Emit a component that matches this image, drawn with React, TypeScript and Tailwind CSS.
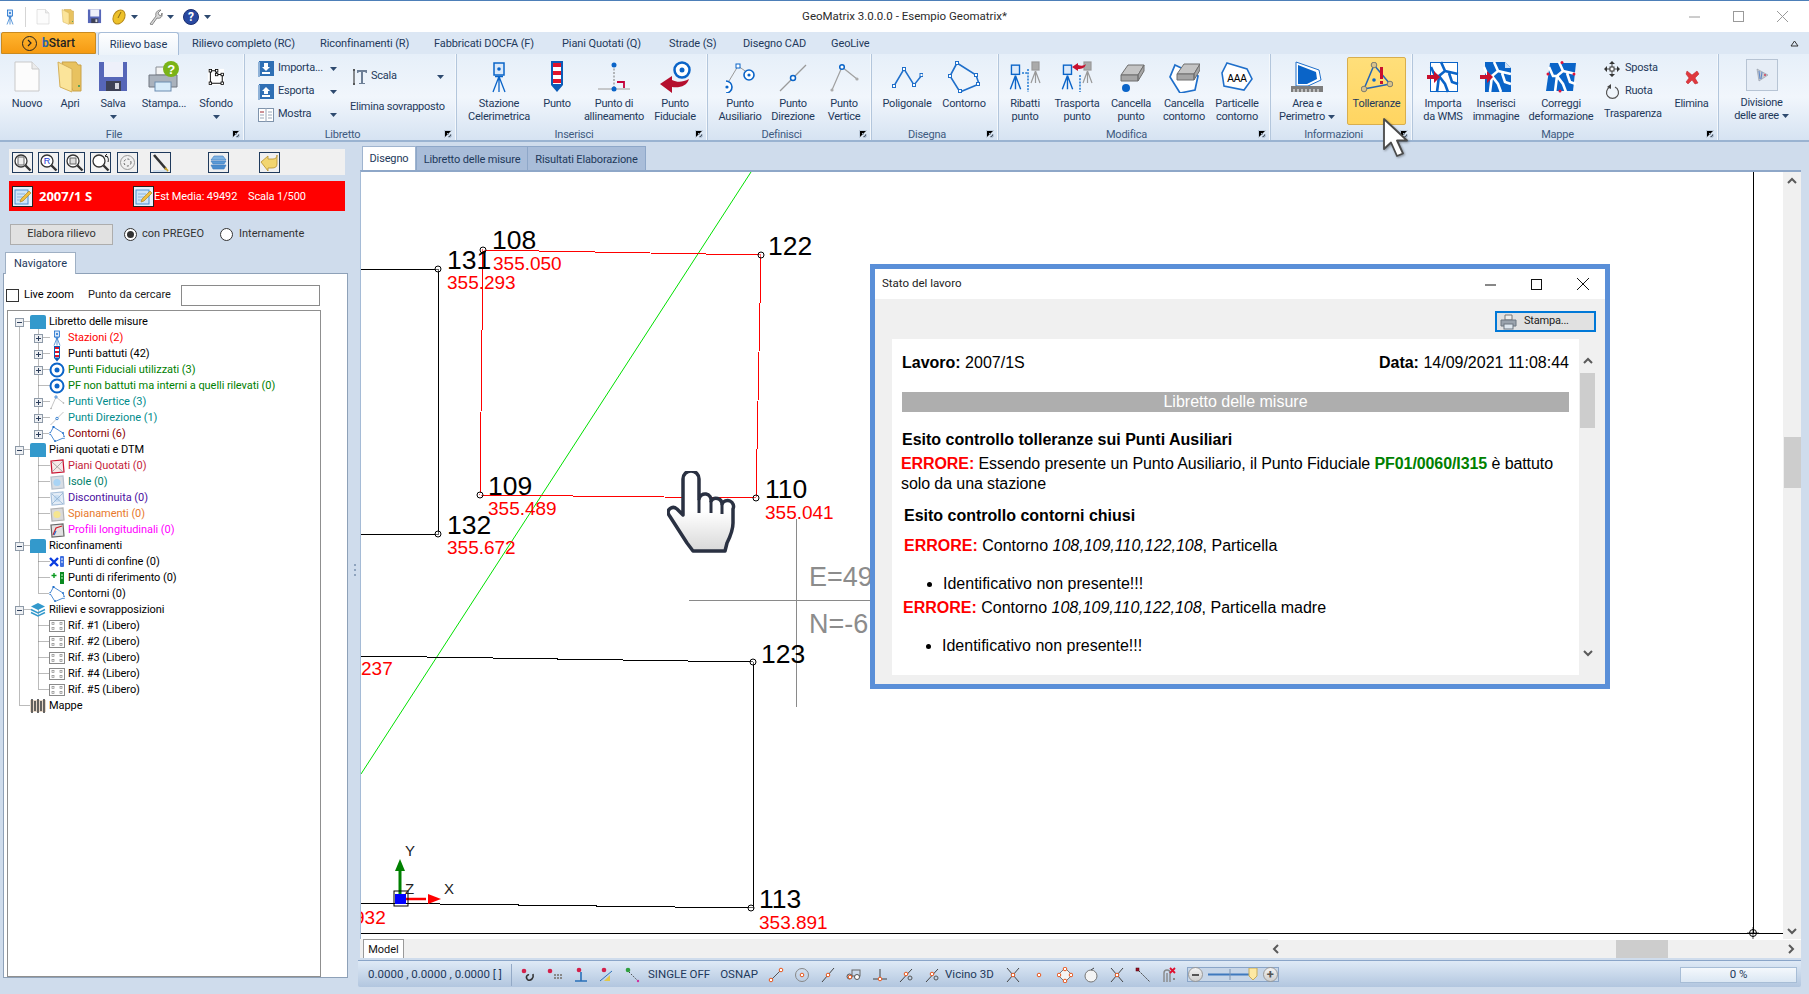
import React from 'react';

type IconProps = { s?: number };
const I = ({ s = 32, children }: { s?: number; children: React.ReactNode }) => (
  <svg width={s} height={s} viewBox="0 0 32 32" fill="none" className="shrink-0">{children}</svg>
);
const S = ({ children }: { children: React.ReactNode }) => (
  <svg width={16} height={16} viewBox="0 0 16 16" fill="none" className="shrink-0">{children}</svg>
);

const BLUE = '#0a64c8';

// ---- icone ribbon ----
const IconNew = ({ s }: IconProps) => (
  <I s={s}><path d="M4 1h17l7 7v22H4z" fill="#fcfcfc" stroke="#c9c9c9" /><path d="M21 1v7h7" fill="#ececec" stroke="#c9c9c9" /></I>
);
const IconFolder = ({ s }: IconProps) => (
  <I s={s}><path d="M8 1h14l2 3h3v26h-8z" fill="#e8c25f" stroke="#c9a24a" /><path d="M4 1l14 7v23L6 26z" fill="#fbe49a" stroke="#d5b05a" /><rect x="24" y="24" width="2" height="2" fill="#5aa05a" /></I>
);
const IconSave = ({ s }: IconProps) => (
  <I s={s}><rect x="2" y="1" width="28" height="29" fill="#5666b8" /><rect x="7" y="1" width="19" height="15" fill="#eef0fa" /><rect x="9" y="20" width="15" height="10" fill="#3d4156" /><rect x="18" y="22" width="4" height="6" fill="#d6d8e2" /></I>
);
const IconPrint = ({ s }: IconProps) => (
  <I s={s}>
    <path d="M8 6h14v8H8z" fill="#f4f4f4" stroke="#8a8f96" />
    <path d="M1 14h28v12H1z" fill="#aab2bc" stroke="#717780" />
    <rect x="7" y="21" width="16" height="9" fill="#d7ecfa" stroke="#6d8db0" />
    <circle cx="23" cy="8" r="8" fill="#7ab317" />
    <text x="23" y="13" textAnchor="middle" fontSize="13" fontWeight="700" fill="#fff" fontFamily="Liberation Sans">?</text>
  </I>
);
const IconSfondo = ({ s }: IconProps) => (
  <I s={s}>
    <rect x="3" y="3" width="26" height="26" fill="#fff" />
    <path d="M7 6h10v6h9v14H7z" stroke="#000" strokeWidth="1.500" />
    <g fill="#fff" stroke="#000" strokeWidth="1.300"><rect x="5" y="4" width="4" height="4" /><rect x="15" y="4" width="4" height="4" /><rect x="15" y="10" width="4" height="4" /><rect x="24" y="10" width="4" height="4" /><rect x="24" y="24" width="4" height="4" /><rect x="5" y="24" width="4" height="4" /></g>
  </I>
);
const IconStation = ({ s }: IconProps) => (
  <I s={s}>
    <rect x="11" y="2" width="10" height="12" fill="#dbe9fa" stroke={BLUE} strokeWidth="1.500" />
    <circle cx="16" cy="8" r="1.800" fill={BLUE} />
    <path d="M12 15.500h8M16 15.500L10 31M16 15.500v15.500M16 15.500L22 31" stroke={BLUE} strokeWidth="1.300" />
  </I>
);
const IconMarker = ({ s }: IconProps) => (
  <I s={s}>
    <path d="M10 0h12v24l-6 7-6-7z" fill="#0b5cb8" />
    <rect x="12" y="2" width="8" height="21" fill="#fff" />
    <rect x="12" y="2" width="8" height="4" fill="#e0142c" /><rect x="12" y="10" width="8" height="4" fill="#e0142c" /><rect x="12" y="18" width="8" height="4" fill="#e0142c" />
  </I>
);
const IconAllinea = ({ s }: IconProps) => (
  <I s={s}>
    <path d="M0 28h32" stroke="#a9a9a9" strokeWidth="1.2" />
    <path d="M16 4v24" stroke="#777" strokeDasharray="2 1.5" />
    <circle cx="16" cy="4" r="2.5" fill={BLUE} /><circle cx="16" cy="28" r="2.5" fill={BLUE} />
    <path d="M19 21h7v6" stroke="#c4003a" strokeWidth="1.8" />
  </I>
);
const IconFiducial = ({ s }: IconProps) => (
  <I s={s}>
    <circle cx="23" cy="9" r="7.5" fill="#fff" stroke={BLUE} strokeWidth="2.5" /><circle cx="23" cy="9" r="2.5" fill={BLUE} />
    <path d="M1 23l12-8v4c6 3 11 2 17-1-2 7-9 9-17 8v6z" fill="#b50f2e" />
  </I>
);
const Ring = ({ s = 16 }: IconProps) => (
  <I s={s}><circle cx="16" cy="16" r="13" fill="#fff" stroke={BLUE} strokeWidth="4" /><circle cx="16" cy="16" r="5" fill={BLUE} /></I>
);
const IconAusil = ({ s }: IconProps) => (
  <I s={s}>
    <path d="M5 20L14 5l10 7" stroke="#999" />
    <rect x="12" y="3" width="4" height="4" fill="#fff" stroke={BLUE} />
    <circle cx="25" cy="14" r="5" fill="#fff" stroke={BLUE} strokeWidth="1.6" /><circle cx="25" cy="14" r="1.6" fill={BLUE} />
    <path d="M0 20a6 6 0 0 1 0 12" fill="#fff" stroke={BLUE} strokeWidth="1.6" transform="translate(2 0)" /><circle cx="3" cy="26" r="1.6" fill={BLUE} />
  </I>
);
const IconDirez = ({ s }: IconProps) => (
  <I s={s}><path d="M3 30L29 4" stroke="#9a9a9a" strokeWidth="1.2" /><circle cx="16" cy="17" r="2.5" fill="#fff" stroke={BLUE} strokeWidth="1.5" /></I>
);
const IconVert = ({ s }: IconProps) => (
  <I s={s}><path d="M4 29L14 6l15 12" stroke="#a0a0a0" strokeWidth="1.2" /><circle cx="14" cy="6" r="2.3" fill="#fff" stroke={BLUE} strokeWidth="1.5" /><circle cx="4" cy="29" r="1.6" fill="#aaa" /><circle cx="29" cy="18" r="1.6" fill="#aaa" /></I>
);
const IconPolig = ({ s }: IconProps) => (
  <I s={s}>
    <path d="M3 25L13 8l10 16 8-10" stroke="#1f6fca" strokeWidth="1.5" />
    <g fill="#fff" stroke="#1f6fca"><rect x="1.5" y="23.5" width="3" height="3" /><rect x="11.5" y="6.5" width="3" height="3" /><rect x="21.5" y="22.5" width="3" height="3" /><rect x="29" y="12.5" width="3" height="3" /></g>
  </I>
);
const IconContorno = ({ s }: IconProps) => (
  <I s={s}>
    <path d="M9 2l19 12 3 9-19 8L2 15z" fill="#fff" fillOpacity=".15" stroke="#1f6fca" strokeWidth="1.6" />
    <g fill="#fff" stroke="#1f6fca"><rect x="7.5" y="0.5" width="3" height="3" /><rect x="26.5" y="12.5" width="3" height="3" /><rect x="28.5" y="21.5" width="3" height="3" /><rect x="10.5" y="28.5" width="3" height="3" /><rect x="0.5" y="13.5" width="3" height="3" /></g>
  </I>
);
const MiniTripod = ({ x, c }: { x: number; c: string }) => (
  <g transform={`translate(${x} 0)`} stroke={c} strokeWidth="1.2">
    <rect x="3" y="1" width="7" height="8" fill={c === '#999' ? '#aaa' : '#dbe9fa'} />
    <path d="M6.5 10L2 22M6.5 10v12M6.5 10L11 22" />
  </g>
);
const IconRibatti = ({ s }: IconProps) => (
  <I s={s}>
    <g transform="translate(-1 3) scale(1.15)"><MiniTripod x={0} c={BLUE} /></g>
    <MiniTripod x={20} c="#999" />
    <path d="M13 12h5M19 8v23" stroke="#1f78d1" strokeDasharray="2 1.2" strokeWidth="1.5" />
  </I>
);
const IconTrasp = ({ s }: IconProps) => (
  <I s={s}>
    <g transform="translate(-1 3) scale(1.15)"><MiniTripod x={0} c={BLUE} /></g>
    <MiniTripod x={20} c="#999" />
    <path d="M19 14v17" stroke="#1f78d1" strokeDasharray="2 1.2" strokeWidth="1.5" />
    <path d="M11 6l6-4v2c3 1 6 1 8-1-1 4-4 5-8 5v2z" fill="#c8102e" />
  </I>
);
const Eraser = ({ tf = '' }: { tf?: string }) => (
  <g transform={tf}>
    <path d="M9 3h16l-6 10H2z" fill="#c4c4c4" stroke="#6f6f6f" />
    <path d="M2 13h17v6H2zM19 13l6-10v6l-6 10z" fill="#a5a5a5" stroke="#6f6f6f" />
  </g>
);
const IconCancP = ({ s }: IconProps) => (
  <I s={s}><Eraser tf="translate(4 1)" /><circle cx="11" cy="27" r="4" fill={BLUE} /></I>
);
const IconCancC = ({ s }: IconProps) => (
  <I s={s}><path d="M7 4l23 11-3 14-15 3L2 16z" fill="#fff" stroke="#1f6fca" strokeWidth="1.7" /><Eraser tf="translate(7 0)" /></I>
);
const IconPart = ({ s }: IconProps) => (
  <I s={s}>
    <path d="M6 2l20 6 5 10-8 11-20-4L1 12z" fill="#fff" stroke="#1f6fca" strokeWidth="1.6" />
    <text x="16" y="21" textAnchor="middle" fontSize="10" fill="#000" fontFamily="Liberation Sans">AAA</text>
  </I>
);
const IconArea = ({ s }: IconProps) => (
  <I s={s}>
    <path d="M5 1l23 8 2 10-13 6H5z" fill="#fff" stroke="#1f6fca" strokeWidth="1" />
    <path d="M7 4l18 7 1 7-10 5H7z" fill="#0a64c8" />
    <rect x="0" y="25" width="32" height="6" fill="#7d7d7d" />
    <path d="M3 28v3M7 28v3M11 28v3M15 28v3M19 28v3M23 28v3M27 28v3" stroke="#fff" />
  </I>
);
const IconToll = ({ s }: IconProps) => (
  <I s={s}>
    <path d="M13 3L3 27l26-5z" stroke="#2265b8" strokeWidth="1.5" />
    <g fill="#d8c28a" stroke="#7a7a70"><circle cx="13" cy="3" r="2.8" /><circle cx="3" cy="27" r="2.8" /><circle cx="29" cy="22" r="2.8" /></g>
    <circle cx="13" cy="18" r="1.8" fill={BLUE} />
    <rect x="19" y="5" width="3" height="12" fill="#c8102e" /><rect x="19" y="19" width="3" height="3" fill="#c8102e" />
  </I>
);
const Roads = ({ c }: { c: string }) => (
  <path d="M14 1l4 9-6 5 6 8 3 8M18 10l13 3M14 15H8L4 6M12 15l-2 16M22 12l3 9 6 2" stroke={c} strokeWidth="2.6" />
);
const RedIn = () => <path d="M0 14h7v-4l6 6-6 6v-4H0z" fill="#c8102e" />;
const IconWms = ({ s }: IconProps) => (
  <I s={s}><rect x="3" y="1" width="28" height="30" fill={BLUE} /><rect x="4" y="2" width="26" height="28" fill="#fff" /><Roads c={BLUE} /><RedIn /></I>
);
const IconIns = ({ s }: IconProps) => (
  <I s={s}><path d="M5 1h20l6 6v24H5z" fill={BLUE} /><path d="M25 1v6h6" fill="#cfe1f6" /><Roads c="#fff" /><RedIn /></I>
);
const IconCorr = ({ s }: IconProps) => (
  <I s={s}>
    <path d="M5 2h26l-3 28H1z" fill={BLUE} /><Roads c="#fff" />
    <g fill="#e0143c"><circle cx="17" cy="1.5" r="1.5" /><circle cx="3" cy="13" r="1.5" /><circle cx="29" cy="13" r="1.5" /><circle cx="15" cy="30" r="1.5" /></g>
  </I>
);
const IconMove = () => (
  <S>
    <path d="M8 1v14M1 8h14" stroke="#444" />
    <path d="M8 0l3 3H5zM8 16l3-3H5zM0 8l3-3v6zM16 8l-3-3v6z" fill="#333" />
    <rect x="6" y="6" width="4" height="4" fill="#fff" stroke="#333" />
  </S>
);
const IconRotate = () => (
  <S><path d="M6 3a6 6 0 1 0 5 0" stroke="#555" strokeWidth="1.2" /><path d="M8 0v5L4 3z" fill="#444" transform="translate(-1 0)" /></S>
);
const IconDel = () => (
  <S><path d="M3 2l5 4 5-4 2 3-4 4 3 5-3 1-3-4-4 4-2-2 3-4-3-4z" fill="#e0383e" stroke="#b82024" strokeWidth=".5" /></S>
);
const IconDiv = () => (
  <div className="w-[32px] h-[32px] border border-[#b7c4d4] bg-[#e6edf6] flex items-center justify-center">
    <svg width="14" height="14" viewBox="0 0 14 14"><path d="M2 1l11 6-9 6z" fill="#c6cad2" stroke="#8f97a5" strokeWidth=".6" /><path d="M4 3l1 8M7 4l-1 7" stroke="#5b86c8" /><circle cx="10" cy="7" r="1" fill="#d2405a" /></svg>
  </div>
);
const Down = () => (
  <svg width="7" height="4" viewBox="0 0 7 4" className="shrink-0"><path d="M0 0h7L3.5 4z" fill="#2e4a6f" /></svg>
);
const Launcher = () => (
  <svg width="8" height="8" viewBox="0 0 8 8" className="absolute right-[4px] bottom-[2px]"><path d="M.5 7.5v-7h7" stroke="#c0cfe0" /><path d="M3 3l4 4M7 4v3H4" stroke="#9fb2c8" /></svg>
);

// ---- ribbon ----
const Group = ({ label, w, launcher = true, children }: { label: string; w: string; launcher?: boolean; children: React.ReactNode }) => (
  <div className={`${w} relative flex flex-col border-r border-[#b3c6dc] shadow-[inset_-1px_0_0_#f4f8fc]`}>
    <div className="h-[71px] flex pt-[3px]">{children}</div>
    <div className="h-[15px] leading-[20px] text-center text-[#3d5a80] pr-[16px]">{label}</div>
    {launcher && <Launcher />}
  </div>
);
const Big = ({ w, icon, lines, arrow }: { w: string; icon: React.ReactNode; lines: string[]; arrow?: boolean }) => (
  <div className={`${w} flex flex-col items-center shrink-0`}>
    <div className="h-[40px] flex items-center justify-center">{icon}</div>
    {lines.map((l) => <div key={l} className="leading-[13px] whitespace-nowrap">{l}</div>)}
    {arrow && <div className="h-[13px] flex items-center"><Down /></div>}
  </div>
);
const Small = ({ icon, label }: { icon: React.ReactNode; label: string }) => (
  <div className="h-[23px] shrink-0 flex items-center">
    <div className="w-[17px] flex justify-center mr-[4px]">{icon}</div>
    <span className="w-[52px] whitespace-nowrap">{label}</span>
    <Down />
  </div>
);
const BookIcon = ({ up }: { up?: boolean }) => (
  <svg width="16" height="16" viewBox="0 0 16 16" className="shrink-0">
    <rect x="1" y="0" width="15" height="15" fill="#2f6fb4" />
    <rect x="0" y="1" width="2" height="15" fill="#8fb2d8" />
    <path d={up ? 'M8 3l4 4H10v3H6V7H4z' : 'M6 2h4v4h2l-4 4-4-4h2z'} fill="#fff" />
    <rect x="4" y="11" width="8" height="2" fill="#fff" />
  </svg>
);

const Ribbon = () => (
  <div className="h-[88px] flex bg-gradient-to-b from-[#e6eff9] via-[#f1f6fc] to-[#d6e3f2] border-b-2 border-[#9ab3d1] text-[#1e395b] shrink-0 tracking-[-0.25px]">
    <Group label="File" w="w-[245px]">
      <div className="w-[5px]" />
      <Big w="w-[44px]" icon={<IconNew />} lines={['Nuovo']} />
      <Big w="w-[42px]" icon={<IconFolder />} lines={['Apri']} />
      <Big w="w-[44px]" icon={<IconSave />} lines={['Salva']} arrow />
      <Big w="w-[58px]" icon={<IconPrint />} lines={['Stampa...']} />
      <Big w="w-[46px]" icon={<IconSfondo s={20} />} lines={['Sfondo']} arrow />
    </Group>
    <Group label="Libretto" w="w-[212px]">
      <div className="ml-[12px] w-[93px] flex flex-col">
        <Small icon={<BookIcon />} label="Importa..." />
        <Small icon={<BookIcon up />} label="Esporta" />
        <Small icon={
          <svg width="16" height="14" viewBox="0 0 16 14"><rect x=".5" y=".5" width="15" height="13" fill="#fff" stroke="#7f93ab" /><path d="M8 0v14M2 4h4M10 4h4M2 7h4M10 7h4M2 10h4M10 10h4" stroke="#9aa8ba" /><path d="M2 4h4" stroke="#d05050" /></svg>
        } label="Mostra" />
      </div>
      <div className="flex flex-col">
        <div className="h-[29px] mt-[5px] flex items-center pl-[3px]">
          <svg width="14" height="16" viewBox="0 0 14 16" className="shrink-0"><path d="M1 0v16M0 1h2M0 15h2" stroke="#222" /><path d="M4 1h10v3h-1l-1-1H10v11h2v1H6v-1h2V3H6L5 4H4z" fill="#6d7f96" /></svg>
          <span className="ml-[4px] w-[66px]">Scala</span>
          <Down />
        </div>
        <div className="mt-[8px] whitespace-nowrap">Elimina sovrapposto</div>
      </div>
    </Group>
    <Group label="Inserisci" w="w-[251px]">
      <div className="w-[6px]" />
      <Big w="w-[72px]" icon={<IconStation />} lines={['Stazione', 'Celerimetrica']} />
      <Big w="w-[44px]" icon={<IconMarker />} lines={['Punto']} />
      <Big w="w-[70px]" icon={<IconAllinea />} lines={['Punto di', 'allineamento']} />
      <Big w="w-[52px]" icon={<IconFiducial />} lines={['Punto', 'Fiduciale']} />
    </Group>
    <Group label="Definisci" w="w-[164px]">
      <div className="w-[6px]" />
      <Big w="w-[52px]" icon={<IconAusil />} lines={['Punto', 'Ausiliario']} />
      <Big w="w-[54px]" icon={<IconDirez />} lines={['Punto', 'Direzione']} />
      <Big w="w-[48px]" icon={<IconVert />} lines={['Punto', 'Vertice']} />
    </Group>
    <Group label="Disegna" w="w-[127px]">
      <div className="w-[5px]" />
      <Big w="w-[60px]" icon={<IconPolig />} lines={['Poligonale']} />
      <Big w="w-[54px]" icon={<IconContorno />} lines={['Contorno']} />
    </Group>
    <Group label="Modifica" w="w-[272px]">
      <div className="w-[3px]" />
      <Big w="w-[46px]" icon={<IconRibatti />} lines={['Ribatti', 'punto']} />
      <Big w="w-[58px]" icon={<IconTrasp />} lines={['Trasporta', 'punto']} />
      <Big w="w-[50px]" icon={<IconCancP />} lines={['Cancella', 'punto']} />
      <Big w="w-[56px]" icon={<IconCancC />} lines={['Cancella', 'contorno']} />
      <Big w="w-[50px]" icon={<IconPart />} lines={['Particelle', 'contorno']} />
    </Group>
    <Group label="Informazioni" w="w-[142px]">
      <div className="w-[4px]" />
      <div className="w-[64px] flex flex-col items-center shrink-0">
        <div className="h-[40px] flex items-center justify-center"><IconArea /></div>
        <div className="leading-[13px]">Area e</div>
        <div className="leading-[13px] flex items-center gap-[3px] whitespace-nowrap">Perimetro <Down /></div>
      </div>
      <div className="ml-[8px] w-[59px] h-[68px] flex flex-col items-center rounded-[2px] border border-[#d8ae4e] bg-gradient-to-b from-[#ffdf7a] to-[#ffd561]">
        <div className="h-[39px] flex items-center justify-center"><IconToll /></div>
        <div className="leading-[13px]">Tolleranze</div>
      </div>
    </Group>
    <Group label="Mappe" w="w-[306px]">
      <div className="w-[7px]" />
      <Big w="w-[46px]" icon={<IconWms />} lines={['Importa', 'da WMS']} />
      <Big w="w-[60px]" icon={<IconIns />} lines={['Inserisci', 'immagine']} />
      <Big w="w-[70px]" icon={<IconCorr />} lines={['Correggi', 'deformazione']} />
      <div className="ml-[8px] w-[68px] flex flex-col shrink-0">
        <div className="h-[23px] shrink-0 flex items-center"><IconMove /><span className="ml-[5px]">Sposta</span></div>
        <div className="h-[23px] shrink-0 flex items-center"><IconRotate /><span className="ml-[5px]">Ruota</span></div>
        <div className="h-[23px] shrink-0 flex items-center whitespace-nowrap">Trasparenza</div>
      </div>
      <div className="w-[39px] flex flex-col items-center shrink-0">
        <div className="h-[40px] flex items-center justify-center"><IconDel /></div>
        <div className="leading-[13px]">Elimina</div>
      </div>
    </Group>
    <div className="flex-1 pt-[5px] flex flex-col items-center pr-[5px]">
      <IconDiv />
      <div className="mt-[5px] leading-[13px]">Divisione</div>
      <div className="leading-[13px] flex items-center gap-[3px]">delle aree <Down /></div>
    </div>
  </div>
);

// ---- barra titolo + tab ----
const TitleBar = () => (
  <div className="h-[31px] grid grid-cols-[1fr_auto_1fr] items-center bg-white shrink-0 text-[#2b2b2b]">
    <div className="flex items-center pl-[1px]">
      <span className="w-[16px] ml-[1px]"><IconStation s={16} /></span>
      <div className="w-px h-[20px] bg-[#d5d5d5] ml-[7px]" />
      <span className="ml-[9px]"><IconNew s={16} /></span>
      <span className="ml-[9px]"><IconFolder s={16} /></span>
      <span className="ml-[11px]"><IconSave s={15} /></span>
      <svg width="16" height="16" viewBox="0 0 16 16" className="ml-[9px]"><ellipse cx="8" cy="8" rx="5.5" ry="7.5" transform="rotate(30 8 8)" fill="#edc12a" stroke="#b5891a" /><path d="M10 3l-3 6" stroke="#8a6a12" /></svg>
      <span className="ml-[4px]"><Down /></span>
      <svg width="16" height="16" viewBox="0 0 16 16" fill="none" className="ml-[9px]"><path d="M3 15l6-8c-1-3 1-6 5-6l-3 3 1 2 2 1 1-3c1 4-2 6-5 5l-5 7z" fill="#d8d8d8" stroke="#707070" strokeWidth=".8" /></svg>
      <span className="ml-[4px]"><Down /></span>
      <div className="ml-[9px] w-[16px] h-[16px] rounded-full bg-[#2848a0] border border-[#1b2f70] text-white text-[12px] font-bold leading-[14px] text-center">?</div>
      <span className="ml-[5px]"><Down /></span>
    </div>
    <div className="whitespace-nowrap text-[11.5px]">GeoMatrix 3.0.0.0 - Esempio Geomatrix*</div>
    <div className="flex items-center justify-end pr-[21px] gap-[33px]">
      <svg width="11" height="11" viewBox="0 0 11 11"><path d="M0 6h11" stroke="#9a9a9a" /></svg>
      <svg width="11" height="11" viewBox="0 0 11 11"><rect x=".5" y=".5" width="10" height="10" fill="none" stroke="#9a9a9a" /></svg>
      <svg width="11" height="11" viewBox="0 0 11 11"><path d="M0 0l11 11M11 0L0 11" stroke="#9a9a9a" /></svg>
    </div>
  </div>
);
const RTab = ({ w, label }: { w: string; label: string }) => (
  <div className={`${w} shrink-0 whitespace-nowrap text-[#1e395b] leading-[23px] tracking-[-0.1px]`}>{label}</div>
);
const TabRow = () => (
  <div className="h-[22px] flex items-stretch bg-[#dce7f4] shrink-0 relative">
    <div className="ml-[1px] w-[95px] flex items-center justify-center gap-[5px] rounded-t-[2px] border border-[#c98a20] bg-gradient-to-b from-[#ffb52e] to-[#f59a10]">
      <span className="w-[15px] h-[15px] rounded-full border border-[#222] flex items-center justify-center">
        <svg width="7" height="8" viewBox="0 0 7 8"><path d="M2 1l3 3-3 3" stroke="#222" strokeWidth="1.2" fill="none" /></svg>
      </span>
      <span className="text-[12px] font-medium text-[#222]"><span className="text-[#2a62a8] font-bold">b</span>Start</span>
    </div>
    <div className="ml-[2px] w-[81px] -mb-[1px] z-10 text-center leading-[23px] tracking-[-0.1px] text-[#1e395b] rounded-t-[3px] border border-b-0 border-[#a7bdd8] bg-gradient-to-b from-[#ffffff] to-[#ecf3fa]">Rilievo base</div>
    <div className="w-[13px]" />
    <RTab w="w-[128px]" label="Rilievo completo (RC)" />
    <RTab w="w-[114px]" label="Riconfinamenti (R)" />
    <RTab w="w-[128px]" label="Fabbricati DOCFA (F)" />
    <RTab w="w-[107px]" label="Piani Quotati (Q)" />
    <RTab w="w-[74px]" label="Strade (S)" />
    <RTab w="w-[88px]" label="Disegno CAD" />
    <RTab w="w-[60px]" label="GeoLive" />
    <div className="flex-1 flex justify-end items-center pr-[10px]">
      <svg width="9" height="9" viewBox="0 0 9 9" fill="none"><path d="M1 7l3.5-5L8 7z" stroke="#333" /></svg>
    </div>
  </div>
);

// ---- pannello sinistro ----
const ZoomBtn = ({ inner }: { inner: React.ReactNode }) => (
  <div className="w-[21px] h-[21px] border border-[#1f3a5c] bg-[#f2f2f2] flex items-center justify-center shrink-0">
    <svg width="19" height="19" viewBox="0 0 19 19" fill="none">
      <circle cx="8" cy="8" r="6" fill="#fff" stroke="#333" strokeWidth="1.3" />
      <path d="M12.5 12.5l5 5" stroke="#333" strokeWidth="2.4" />
      {inner}
    </svg>
  </div>
);
const EditIcon = () => (
  <div className="w-[21px] h-[21px] border border-[#222] flex items-center justify-center shrink-0 bg-[#e7f1fb]">
    <svg width="18" height="18" viewBox="0 0 18 18"><rect x="1" y="3" width="13" height="14" fill="#cfe4f7" stroke="#4a90d0" /><path d="M3 7h8M3 10h8M3 13h6" stroke="#8bb5dc" /><path d="M7 12l8-8 2 2-8 8-3 1z" fill="#efc03e" stroke="#a8771a" strokeWidth=".6" /></svg>
  </div>
);
const Toolbar = () => (
  <div className="ml-[9px] w-[336px] h-[26px] bg-[#f0f0f0] flex items-center">
    <div className="w-[3px]" />
    <ZoomBtn inner={<rect x="5" y="4" width="6" height="8" fill="#eee" stroke="#666" />} />
    <div className="w-[5px]" />
    <ZoomBtn inner={<text x="8" y="11" textAnchor="middle" fontSize="9" fill="#1533d0" fontFamily="Liberation Sans">R</text>} />
    <div className="w-[5px]" />
    <ZoomBtn inner={<rect x="5" y="5" width="6" height="6" fill="#ddd" stroke="#666" />} />
    <div className="w-[5px]" />
    <ZoomBtn inner={<path d="M14 3c3 0 4 3 3 6M14 3l2-2M14 3l3 1" stroke="#222" />} />
    <div className="w-[6px]" />
    <div className="w-[21px] h-[21px] border border-[#1f3a5c] flex items-center justify-center shrink-0">
      <svg width="17" height="17" viewBox="0 0 17 17" fill="none"><circle cx="8.5" cy="8.5" r="7" stroke="#999" /><circle cx="8.5" cy="8.5" r="3.5" stroke="#555" strokeDasharray="2 2" /></svg>
    </div>
    <div className="w-[12px]" />
    <div className="w-[21px] h-[21px] border border-[#1f3a5c] flex items-center justify-center shrink-0">
      <svg width="19" height="19" viewBox="0 0 19 19" fill="none"><path d="M3 2l12 14" stroke="#333" strokeWidth="2.6" /><path d="M14 15l3 3" stroke="#c9a227" strokeWidth="2" /><path d="M2 18h14" stroke="#b5d0ea" /></svg>
    </div>
    <div className="w-[37px]" />
    <div className="w-[21px] h-[21px] border border-[#1f3a5c] flex items-center justify-center shrink-0">
      <svg width="19" height="19" viewBox="0 0 19 19"><path d="M5 3h9l3 4H2z" fill="#7fb2e2" stroke="#3a7ac0" strokeWidth=".6" /><path d="M2 8h15l-2 3H4z" fill="#5b9ad6" stroke="#3a7ac0" strokeWidth=".6" /><path d="M2 12h15l-2 4H4z" fill="#4a8ccc" stroke="#3a7ac0" strokeWidth=".6" /></svg>
    </div>
    <div className="w-[30px]" />
    <div className="w-[21px] h-[21px] border border-[#1f3a5c] flex items-center justify-center shrink-0">
      <svg width="19" height="19" viewBox="0 0 19 19"><path d="M1 9l7-6v3h5c3 0 4-2 4-4v9c0 3-2 4-5 4H8v3z" fill="#f2d56f" stroke="#b58f2c" strokeWidth=".8" /></svg>
    </div>
  </div>
);

type Node = { level: 0 | 1; label: string; color?: string; icon: React.ReactNode; exp?: 'plus' | 'minus' };
const Exp = ({ kind }: { kind: 'plus' | 'minus' }) => (
  <svg width="9" height="9" viewBox="0 0 9 9" className="shrink-0">
    <rect x=".5" y=".5" width="8" height="8" fill="#eef0f3" stroke="#8e9aa8" />
    <path d={kind === 'plus' ? 'M2 4.5h5M4.5 2v5' : 'M2 4.5h5'} stroke="#2d3f5c" />
  </svg>
);
const FolderTile = () => <div className="w-[16px] h-[14px] rounded-t-[2px] bg-[#3399cc]" />;
const Layers = () => (
  <svg width="16" height="15" viewBox="0 0 16 15"><path d="M8 0l7 3.5L8 7 1 3.5z" fill="#3399cc" /><path d="M1 6.5L8 10l7-3.5M1 9.5L8 13l7-3.5" stroke="#3399cc" strokeWidth="1.5" fill="none" /></svg>
);
const Sq = ({ a, b, c, l }: { a: string; b: string; c?: string; l?: string }) => (
  <svg width="16" height="15" viewBox="0 0 16 15" fill="none"><path d="M2 2l12-1 1 12-12 1z" fill={a} stroke={b} strokeWidth="1.2" />{c && <circle cx="8" cy="7.500" r="3.600" fill={c} />}{l && <path d="M3 13L14 2M3 3l11 10" stroke={l} strokeWidth=".8" />}</svg>
);
const Profile = () => (
  <svg width="16" height="15" viewBox="0 0 16 15" fill="none"><path d="M2 2l12-1 1 12-12 1z" fill="#e2e2e2" stroke="#666" strokeWidth="1.2" /><path d="M4 12L7 5l6-2" stroke="#d0202a" strokeWidth="1.200" /><path d="M5 12l2-4" stroke="#2a6fd0" strokeWidth="1.200" /></svg>
);
const Rif = () => (
  <svg width="16" height="12" viewBox="0 0 16 12"><rect x=".5" y=".5" width="15" height="11" fill="#fff" stroke="#8a8a8a" /><g fill="#fff" stroke="#8a8a8a" strokeWidth=".7"><rect x="3" y="2.5" width="2" height="2" /><rect x="11" y="2.5" width="2" height="2" /><rect x="3" y="7.5" width="2" height="2" /><rect x="11" y="7.5" width="2" height="2" /></g></svg>
);
const nodes: Node[] = [
  { level: 0, label: 'Libretto delle misure', icon: <FolderTile />, exp: 'minus' },
  { level: 1, label: 'Stazioni (2)', color: 'text-[#ff0000]', icon: <IconStation s={16} />, exp: 'plus' },
  { level: 1, label: 'Punti battuti (42)', color: 'text-black', icon: <IconMarker s={16} />, exp: 'plus' },
  { level: 1, label: 'Punti Fiduciali utilizzati (3)', color: 'text-[#008000]', icon: <Ring />, exp: 'plus' },
  { level: 1, label: 'PF non battuti ma interni a quelli rilevati (0)', color: 'text-[#008000]', icon: <Ring /> },
  { level: 1, label: 'Punti Vertice (3)', color: 'text-[#008b8b]', icon: <IconVert s={16} />, exp: 'plus' },
  { level: 1, label: 'Punti Direzione (1)', color: 'text-[#008b8b]', icon: <IconDirez s={16} />, exp: 'plus' },
  { level: 1, label: 'Contorni (6)', color: 'text-[#8b0000]', icon: <IconContorno s={16} />, exp: 'plus' },
  { level: 0, label: 'Piani quotati e DTM', icon: <FolderTile />, exp: 'minus' },
  { level: 1, label: 'Piani Quotati (0)', color: 'text-[#c41e3a]', icon: <Sq a="#f7e8e8" b="#c8102e" l="#999" /> },
  { level: 1, label: 'Isole (0)', color: 'text-[#00806a]', icon: <Sq a="#d7dde4" b="#b5bfca" c="#a9d4f5" /> },
  { level: 1, label: 'Discontinuita (0)', color: 'text-[#4b0fa0]', icon: <Sq a="#e4edf6" b="#a8c0da" c="#c9dff3" l="#8fb0d0" /> },
  { level: 1, label: 'Spianamenti (0)', color: 'text-[#e8792c]', icon: <Sq a="#d9d9d9" b="#b0b0b0" c="#f5e58f" /> },
  { level: 1, label: 'Profili longitudinali (0)', color: 'text-[#ff00ff]', icon: <Profile /> },
  { level: 0, label: 'Riconfinamenti', icon: <FolderTile />, exp: 'minus' },
  {
    level: 1, label: 'Punti di confine (0)',
    icon: <svg width="16" height="14" viewBox="0 0 16 14"><path d="M1 3l8 8M9 3l-8 8" stroke="#0a3ce0" strokeWidth="2.4" /><rect x="11" y="1" width="4" height="11" rx="1" fill="#3f6fe0" /><path d="M12 4h2M12 7h2" stroke="#fff" /></svg>,
  },
  {
    level: 1, label: 'Punti di riferimento (0)',
    icon: <svg width="16" height="14" viewBox="0 0 16 14"><path d="M5 2v5M2.5 4.500h5" stroke="#0a9a20" strokeWidth="1.4" /><rect x="11" y="1" width="4" height="12" fill="#0a8a20" /><path d="M12 4h2M12 7h2" stroke="#cfc" /></svg>,
  },
  { level: 1, label: 'Contorni (0)', icon: <IconContorno s={16} /> },
  { level: 0, label: 'Rilievi e sovrapposizioni', icon: <Layers />, exp: 'minus' },
  { level: 1, label: 'Rif. #1 (Libero)', icon: <Rif /> },
  { level: 1, label: 'Rif. #2 (Libero)', icon: <Rif /> },
  { level: 1, label: 'Rif. #3 (Libero)', icon: <Rif /> },
  { level: 1, label: 'Rif. #4 (Libero)', icon: <Rif /> },
  { level: 1, label: 'Rif. #5 (Libero)', icon: <Rif /> },
  {
    level: 0, label: 'Mappe',
    icon: <svg width="16" height="14" viewBox="0 0 16 14"><rect x="0" y="1" width="16" height="12" fill="#e8d8c8" /><path d="M2 0v14M5 2v10M8 0v14M11 2v10M14 0v14" stroke="#444" strokeWidth="1.6" /></svg>,
  },
];

// righe guida dell'albero, coordinate relative al contenitore (riga i = 8 + i*16)
const TreeLines = () => {
  const y = (i: number) => 10.5 + i * 16;
  const seg: string[] = [`M11.5 ${y(0)}V${y(24)}`];
  nodes.forEach((n, i) => {
    if (n.level === 0) seg.push(`M11.5 ${y(i)}H23`);
    else seg.push(`M30.5 ${y(i)}H42`);
  });
  [[0, 7], [8, 13], [14, 17], [18, 23]].forEach(([a, b]) => seg.push(`M30.5 ${y(a)}V${y(b)}`));
  return (
    <svg className="absolute left-0 top-0 pointer-events-none" width="120" height="420">
      <path d={seg.join('')} stroke="#777" strokeDasharray="1 1" fill="none" />
    </svg>
  );
};
const Tree = () => (
  <div className="relative ml-[3px] mt-[4px] w-[314px] h-[667px] border border-[#8f8f8f] pt-[3px] tracking-[-0.05px]">
    <TreeLines />
    {nodes.map((n) => (
      <div key={n.label} className="relative h-[16px] flex items-center whitespace-nowrap">
        {n.level === 0 ? (
          <>
            <div className="w-[16px] pl-[7px] shrink-0">{n.exp && <Exp kind={n.exp} />}</div>
            <div className="w-[16px] ml-[6px] flex justify-center shrink-0">{n.icon}</div>
            <span className="ml-[3px] text-black">{n.label}</span>
          </>
        ) : (
          <>
            <div className="w-[35px] pl-[26px] shrink-0">{n.exp && <Exp kind={n.exp} />}</div>
            <div className="w-[16px] ml-[6px] flex justify-center shrink-0">{n.icon}</div>
            <span className={`ml-[3px] ${n.color ?? 'text-black'}`}>{n.label}</span>
          </>
        )}
      </div>
    ))}
  </div>
);
const LeftPanel = () => (
  <div className="w-[350px] shrink-0 pt-[7px] flex flex-col text-[#222]">
    <Toolbar />
    <div className="ml-[9px] mt-[6px] w-[336px] h-[30px] bg-[#ff0000] flex items-center text-white">
      <div className="w-[3px]" />
      <EditIcon />
      <span className="ml-[6px] pt-[2px] w-[94px] text-[13px] font-bold font-['Open_Sans'] whitespace-nowrap">2007/1 S</span>
      <EditIcon />
      <span className="w-[94px] pt-[2px] tracking-[-0.1px] whitespace-nowrap">Est Media: 49492</span>
      <span className="pt-[2px] tracking-[-0.1px] whitespace-nowrap">Scala 1/500</span>
    </div>
    <div className="mt-[13px] ml-[10px] h-[21px] flex items-center text-[#333]">
      <div className="w-[103px] h-[21px] bg-[#e1e1e1] border border-[#adadad] flex items-center justify-center">Elabora rilievo</div>
      <div className="ml-[11px] w-[13px] h-[13px] rounded-full border border-[#333] bg-white flex items-center justify-center shrink-0"><div className="w-[7px] h-[7px] rounded-full bg-[#333]" /></div>
      <span className="ml-[5px] w-[78px] whitespace-nowrap">con PREGEO</span>
      <div className="w-[13px] h-[13px] rounded-full border border-[#333] bg-white shrink-0" />
      <span className="ml-[6px]">Internamente</span>
    </div>
    <div className="mt-[7px] ml-[5px] w-[71px] h-[22px] -mb-[1px] z-10 bg-white border border-b-0 border-[#9fb0c4] text-center leading-[21px] text-[#1e395b]">Navigatore</div>
    <div className="ml-[3px] w-[345px] h-[705px] bg-white border border-[#8ea1b8] pt-[10px]">
      <div className="flex items-center h-[22px] pl-[2px] text-black">
        <div className="w-[13px] h-[13px] border border-[#333] bg-white shrink-0" />
        <span className="ml-[5px] w-[64px]">Live zoom</span>
        <span className="w-[93px] text-[#222]">Punto da cercare</span>
        <div className="w-[139px] h-[21px] border border-[#8a8a8a]" />
      </div>
      <Tree />
    </div>
  </div>
);

// ---- disegno CAD (coordinate della finestra grazie al viewBox) ----
const Pt = ({ x, y }: { x: number; y: number }) => <circle cx={x} cy={y} r="3" fill="#fff" fillOpacity=".4" stroke="#000" strokeWidth="1" />;
const Big3 = ({ x, y, t }: { x: number; y: number; t: string }) => <text x={x} y={y} fontSize="26.500" fill="#000">{t}</text>;
const Red = ({ x, y, t }: { x: number; y: number; t: string }) => <text x={x} y={y} fontSize="19" fill="#ff0000">{t}</text>;
const Drawing = () => (
  <svg viewBox="361 171 1422 768" width="1422" height="768" className="block font-['Liberation_Sans'] shrink-0">
    <path d="M751 171L361 773" stroke="#00e000" strokeWidth="1" />
    <g shapeRendering="crispEdges">
      <path d="M361 268H438V533H361M361 655L753 661V907L361 902" stroke="#000" strokeWidth="1" fill="none" />
      <path d="M483 249L761 254 756 497 480 494Z" stroke="#ff0000" strokeWidth="1" fill="none" />
      <path d="M796 518V706M689 599H870" stroke="#8a8a8a" strokeWidth="1" />
      <path d="M1753 171V932" stroke="#000" strokeWidth="1" />
      <path d="M361 932H1783" stroke="#000" strokeWidth="1" />
    </g>
    <text x="809" y="585" fontSize="27" fill="#8c8c8c">E=49</text>
    <text x="809" y="632" fontSize="27" fill="#8c8c8c">N=-6</text>
    <Pt x={438} y={268} /><Pt x={438} y={533} /><Pt x={483} y={249} /><Pt x={761} y={254} /><Pt x={756} y={497} /><Pt x={480} y={494} /><Pt x={753} y={661} /><Pt x={751} y={907} />
    <circle cx="1753" cy="932" r="3.500" fill="none" stroke="#000" />
    <path d="M1753 926v12M1747 932h12" stroke="#000" strokeWidth=".7" />
    <Big3 x={447} y={268} t="131" /><Red x={447} y={288} t="355.293" />
    <Big3 x={492} y={248} t="108" /><Red x={493} y={269} t="355.050" />
    <Big3 x={768} y={254} t="122" />
    <Big3 x={488} y={494} t="109" /><Red x={488} y={514} t="355.489" />
    <Big3 x={765} y={497} t="110" /><Red x={765} y={518} t="355.041" />
    <Big3 x={447} y={533} t="132" /><Red x={447} y={553} t="355.672" />
    <Big3 x={761} y={662} t="123" /><Red x={361} y={674} t="237" />
    <Big3 x={759} y={907} t="113" /><Red x={759} y={928} t="353.891" /><Red x={354} y={923} t="932" />
    <path d="M400 893V868" stroke="#008000" strokeWidth="3" /><path d="M400 858l5 12h-10z" fill="#008000" />
    <path d="M406 898h20" stroke="#ff0000" strokeWidth="2.500" /><path d="M441 898l-13-5v10z" fill="#ff0000" />
    <rect x="394" y="890" width="14" height="15" fill="none" stroke="#000" />
    <rect x="395" y="893" width="11" height="10" fill="#0000ff" />
    <text x="405" y="855" fontSize="15" fill="#222">Y</text>
    <text x="444" y="893" fontSize="15" fill="#222">X</text>
    <text x="405" y="893" fontSize="15" fill="#222">Z</text>
  </svg>
);
const ScrollArrow = ({ d }: { d: string }) => (
  <svg width="10" height="10" viewBox="0 0 10 10" fill="none"><path d={d} stroke="#5a5a5a" strokeWidth="2" /></svg>
);

// ---- status bar ----
const Ball = ({ c, cx = 4, cy = 4 }: { c: string; cx?: number; cy?: number }) => <circle cx={cx} cy={cy} r="2.300" fill={c} />;
const Nd = ({ x, y }: { x: number; y: number }) => <circle cx={x} cy={y} r="1.800" fill="#fff" stroke="#e8561c" strokeWidth="1" />;
const StatusBar = () => (
  <div className="ml-[8px] mr-[8px] h-[27px] pt-[1px] shrink-0 flex items-center rounded-b-[2px] border-t border-[#8aa5c8] bg-gradient-to-b from-[#dfeaf6] to-[#b2c6df] text-[#1e395b] text-[11.5px] whitespace-nowrap">
    <span className="ml-[10px] w-[143px]">0.0000 , 0.0000 , 0.0000 [  ]</span>
    <div className="w-px h-[22px] bg-[#93a9c6]" />
    <div className="w-[9px]" />
    <div className="flex items-center gap-[10px]">
      <S><Ball c="#d4204a" cx={3} /><path d="M7 13c-3-2-1-6 1-5M12 7c1 4-2 7-5 6" stroke="#333" strokeWidth="1.6" /></S>
      <S><Ball c="#d4204a" cx={3} /><g fill="#888"><rect x="7" y="7" width="2" height="2" /><rect x="10" y="7" width="2" height="2" /><rect x="13" y="7" width="2" height="2" /><rect x="7" y="10" width="2" height="2" /><rect x="10" y="10" width="2" height="2" /><rect x="13" y="10" width="2" height="2" /></g></S>
      <S><Ball c="#d4204a" cx={6} cy={3} /><path d="M8 5v9M2 14h12" stroke="#2a70b8" strokeWidth="1.6" /></S>
      <S><Ball c="#d4204a" cx={5} cy={3} /><path d="M1 14L13 4" stroke="#2a70b8" /><path d="M5 14l6-6v6z" fill="#e2c84a" /></S>
      <S><Ball c="#30a040" cx={3} cy={3} /><path d="M4 5l9 9" stroke="#444" strokeDasharray="1.500 1.500" /><circle cx="13" cy="14" r="1.200" fill="#d030a0" /></S>
    </div>
    <span className="ml-[7px]">SINGLE OFF</span>
    <span className="ml-[10px]">OSNAP</span>
    <div className="ml-[10px] flex items-center gap-[10px]">
      <S><path d="M2 14L14 2" stroke="#555" /><Nd x={3} y={13} /><Nd x={13} y={3} /></S>
      <S><circle cx="8" cy="8" r="6.500" stroke="#888" /><Nd x={8} y={8} /></S>
      <S><path d="M2 15L14 1" stroke="#444" /><Nd x={8} y={8} /></S>
      <S><rect x="6" y="3" width="8" height="6" stroke="#666" /><rect x="1" y="7" width="5" height="5" rx="2.500" stroke="#555" /><circle cx="11" cy="10" r="2.500" stroke="#555" fill="#fff" /><Nd x={4} y={10} /></S>
      <S><path d="M1 12h14M8 2v10" stroke="#444" /><Nd x={8} y={12} /></S>
      <S><path d="M2 15L14 2" stroke="#444" /><Nd x={8} y={7} /><circle cx="12" cy="11" r="2" stroke="#555" /></S>
      <S><path d="M2 15L14 2" stroke="#444" /><Nd x={8} y={7} /><circle cx="12" cy="11" r="2" stroke="#555" /></S>
    </div>
    <span className="ml-[5px]">Vicino 3D</span>
    <div className="ml-[11px] flex items-center gap-[10px]">
      <S><path d="M2 1l12 14M14 1L2 15" stroke="#444" /><Nd x={8} y={8} /></S>
      <S><Nd x={8} y={8} /></S>
      <S><path d="M8 1l7 7-7 7-7-7z" stroke="#777" fill="#f4f4f4" /><Nd x={8} y={2} /><Nd x={8} y={14} /><Nd x={2} y={8} /><Nd x={14} y={8} /></S>
      <S><circle cx="8" cy="9" r="6" stroke="#777" fill="#f4f4f4" /><path d="M8 3l3-2" stroke="#444" /></S>
      <S><path d="M2 1l12 14M14 1L2 15" stroke="#444" /><Nd x={8} y={8} /></S>
      <S><rect x="1" y="1" width="3" height="3" fill="#a0102a" stroke="#400" strokeWidth=".5" /><path d="M4 4l11 11" stroke="#444" strokeDasharray="2 1" /></S>
      <S><path d="M3 15V6c0-4 6-4 6 0v9M6 15V6" stroke="#888" strokeWidth="1.400" /><path d="M9 1l5 5M14 1L9 6" stroke="#e01030" strokeWidth="1.800" /><rect x="12" y="11" width="2" height="2" fill="#888" /></S>
    </div>
    <div className="ml-[10px] w-[92px] h-[15px] border border-[#8aa5c8] flex items-center justify-between bg-[#c7d6e8]">
      <div className="w-[15px] h-[15px] rounded-full bg-gradient-to-b from-[#f2f2f2] to-[#cfcfcf] border border-[#9a9a9a] flex items-center justify-center shrink-0"><div className="w-[7px] h-[2px] bg-[#555]" /></div>
      <svg width="50" height="13" viewBox="0 0 50 13" className="shrink-0">
        <path d="M0 6.500h48" stroke="#3f79bd" strokeWidth="2" /><path d="M22 1v11" stroke="#7d95b3" />
        <path d="M41 0h8v8l-4 4-4-4z" fill="#fde9a3" stroke="#c8ac5a" />
      </svg>
      <div className="w-[15px] h-[15px] rounded-full bg-gradient-to-b from-[#f2f2f2] to-[#cfcfcf] border border-[#9a9a9a] flex items-center justify-center shrink-0 text-[13px] font-bold leading-none text-[#555]">+</div>
    </div>
    <div className="flex-1" />
    <div className="mr-[4px] w-[117px] h-[16px] border border-[#a7bdd6] bg-gradient-to-b from-[#f4f8fc] to-[#dbe7f3] flex items-center justify-center">0 %</div>
  </div>
);

// ---- finestra stato ----
const Err = () => <b className="text-[#ff0000]">ERRORE:</b>;
const WorkDialog = () => (
  <div className="absolute left-[870px] top-[263px] w-[740px] h-[425px] border-[5px] border-[#5a8fd8] bg-[#f0f0f0] flex flex-col font-['Liberation_Sans'] text-black text-[16px]">
    <div className="h-[30px] bg-white flex items-center justify-between pl-[7px] pr-[16px] shrink-0">
      <span className="text-[11.5px] font-[Roboto] text-[#222]">Stato del lavoro</span>
      <div className="flex items-center gap-[35px]">
        <svg width="11" height="11" viewBox="0 0 11 11"><path d="M0 6h11" stroke="#111" /></svg>
        <svg width="11" height="11" viewBox="0 0 11 11"><rect x=".5" y=".5" width="10" height="10" fill="none" stroke="#111" /></svg>
        <svg width="12" height="12" viewBox="0 0 12 12"><path d="M0 0l12 12M12 0L0 12" stroke="#111" /></svg>
      </div>
    </div>
    <div className="h-[40px] shrink-0 flex justify-end items-start pt-[12px] pr-[9px]">
      <div className="w-[101px] h-[21px] border-2 border-[#0078d7] bg-[#e1e1e1] flex items-center pl-[3px] text-[11px] tracking-[-0.2px] font-[Roboto] text-[#222]">
        <svg width="17" height="16" viewBox="0 0 17 16" className="shrink-0"><path d="M5 1h7v5H5z" fill="#eee" stroke="#777" /><path d="M1 6h15v6H1z" fill="#9aa3ad" stroke="#6d7680" /><rect x="4" y="10" width="9" height="5" fill="#dde6ee" stroke="#6d7680" /></svg>
        <span className="ml-[7px]">Stampa...</span>
      </div>
    </div>
    <div className="flex ml-[17px] h-[336px]">
      <div className="w-[687px] bg-white px-[10px] pt-[15px]">
        <div className="flex justify-between h-[18px] leading-[18px]">
          <span><b>Lavoro:</b> 2007/1S</span>
          <span><b>Data:</b> 14/09/2021 11:08:44</span>
        </div>
        <div className="mt-[20px] h-[20px] leading-[20px] bg-[#aeaeae] text-white text-center">Libretto delle misure</div>
        <div className="mt-[19px] h-[18px] leading-[18px] font-bold">Esito controllo tolleranze sui Punti Ausiliari</div>
        <p className="mt-[5px] -ml-[1px] leading-[20px] tracking-[-0.09px]"><Err /> Essendo presente un Punto Ausiliario, il Punto Fiduciale <b className="text-[#008000]">PF01/0060/I315</b> è battuto solo da una stazione</p>
        <div className="mt-[13px] ml-[2px] h-[18px] leading-[18px] font-bold">Esito controllo contorni chiusi</div>
        <p className="mt-[11px] ml-[2px] leading-[20px]"><Err /> Contorno <i>108,109,110,122,108</i>, Particella</p>
        <ul className="mt-[18px] pl-[41px] list-disc leading-[20px]"><li>Identificativo non presente!!!</li></ul>
        <p className="mt-[4px] ml-[1px] leading-[20px]"><Err /> Contorno <i>108,109,110,122,108</i>, Particella madre</p>
        <ul className="mt-[18px] pl-[40px] list-disc leading-[20px]"><li>Identificativo non presente!!!</li></ul>
      </div>
      <div className="w-[17px] flex flex-col items-center">
        <div className="h-[34px] flex items-center justify-end flex-col pb-[7px]"><ScrollArrow d="M1 7l4-4 4 4" /></div>
        <div className="w-[15px] h-[55px] bg-[#cdcdcd]" />
        <div className="flex-1" />
        <div className="h-[34px] flex items-center pb-[10px]"><ScrollArrow d="M1 3l4 4 4-4" /></div>
      </div>
    </div>
  </div>
);

export default function App() {
  return (
    <div className="relative w-[1809px] h-[994px] overflow-hidden bg-[#cfdcec] border-t border-[#4d7fb8] flex flex-col text-[11px] font-[Roboto,sans-serif]">
      <TitleBar />
      <TabRow />
      <Ribbon />
      <div className="flex-1 flex min-h-0">
        <LeftPanel />
        <div className="flex-1 min-w-0 flex flex-col pt-[4px]">
          <div className="h-[24px] ml-[12px] flex items-stretch shrink-0 text-[#1e395b] tracking-[-0.15px]">
            <div className="w-[54px] bg-white text-center leading-[23px] border border-b-0 border-[#9fb4cf]">Disegno</div>
            <div className="w-[112px] bg-[#a9bdd9] text-center leading-[25px] border-x border-t border-[#8ea7c8]">Libretto delle misure</div>
            <div className="w-[118px] bg-[#a9bdd9] text-center leading-[25px] border-r border-t border-[#8ea7c8]">Risultati Elaborazione</div>
          </div>
          <div className="ml-[10px] border-t-2 border-[#8ea7c8] h-[769px] flex shrink-0 bg-white border-l border-l-[#a5bbd6] mr-[8px]">
            <Drawing />
            <div className="w-[18px] bg-[#f0f0f0] flex flex-col items-center shrink-0">
              <div className="h-[17px] flex items-center"><ScrollArrow d="M1 7l4-4 4 4" /></div>
              <div className="h-[248px]" />
              <div className="w-[17px] h-[51px] bg-[#cdcdcd]" />
              <div className="flex-1" />
              <div className="h-[17px] flex items-center"><ScrollArrow d="M1 3l4 4 4-4" /></div>
            </div>
          </div>
          <div className="ml-[10px] mr-[8px] h-[19px] bg-[#f0f0f0] flex shrink-0 text-[#111]">
            <div className="ml-[3px] w-[41px] h-[19px] bg-white border border-[#9a9a9a] border-b-0 text-center leading-[20px]">Model</div>
            <div className="w-[864px] shrink-0" />
            <div className="flex-1 flex items-center border-t border-[#ffffff]">
              <div className="w-[16px] flex justify-center"><ScrollArrow d="M7 1L3 5l4 4" /></div>
              <div className="w-[332px]" />
              <div className="w-[52px] h-[18px] bg-[#cdcdcd]" />
              <div className="flex-1" />
              <div className="w-[20px] flex justify-center"><ScrollArrow d="M3 1l4 4-4 4" /></div>
            </div>
          </div>
          <div className="h-[2px] shrink-0" />
          <StatusBar />
        </div>
      </div>
      <svg width="4" height="14" viewBox="0 0 4 14" className="absolute left-[353px] top-[562px]"><g fill="#8ea3bd"><rect x="1" y="1" width="2" height="2" /><rect x="1" y="6" width="2" height="2" /><rect x="1" y="11" width="2" height="2" /></g></svg>
      <WorkDialog />
      {/* cursori catturati nello screenshot */}
      <svg width="70" height="87" viewBox="0 0 70 87" className="absolute left-[667px] top-[470px] blur-[0.5px]">
        <defs><linearGradient id="hand" x1="0" y1="0" x2="0" y2="1"><stop offset="0.5" stopColor="#fff" /><stop offset="1" stopColor="#d8d8d8" /></linearGradient></defs>
        <path d="M16 8a8 8 0 0 1 16 0V28a6 6 0 0 1 12 2 6 6 0 0 1 11 3 6 6 0 0 1 11 5V52c0 8-3 14-6 20l-2 8H26l-6-8L2 44c-3-5 3-10 8-6l6 6z" fill="url(#hand)" stroke="#2a3142" strokeWidth="3.500" strokeLinejoin="round" />
        <path d="M32 28v14M44 30v12M55 33v10" stroke="#2a3142" strokeWidth="3" />
      </svg>
      <svg width="30" height="42" viewBox="0 0 30 42" className="absolute left-[1382px] top-[116px] drop-shadow-[1px_1px_1px_rgba(0,0,0,0.35)]">
        <path d="M2 2V32L9 25.500 15 39 21 36.500 15 23.500H25Z" fill="#fff" stroke="#4a4a4a" strokeWidth="1.800" strokeLinejoin="round" />
      </svg>
    </div>
  );
}
